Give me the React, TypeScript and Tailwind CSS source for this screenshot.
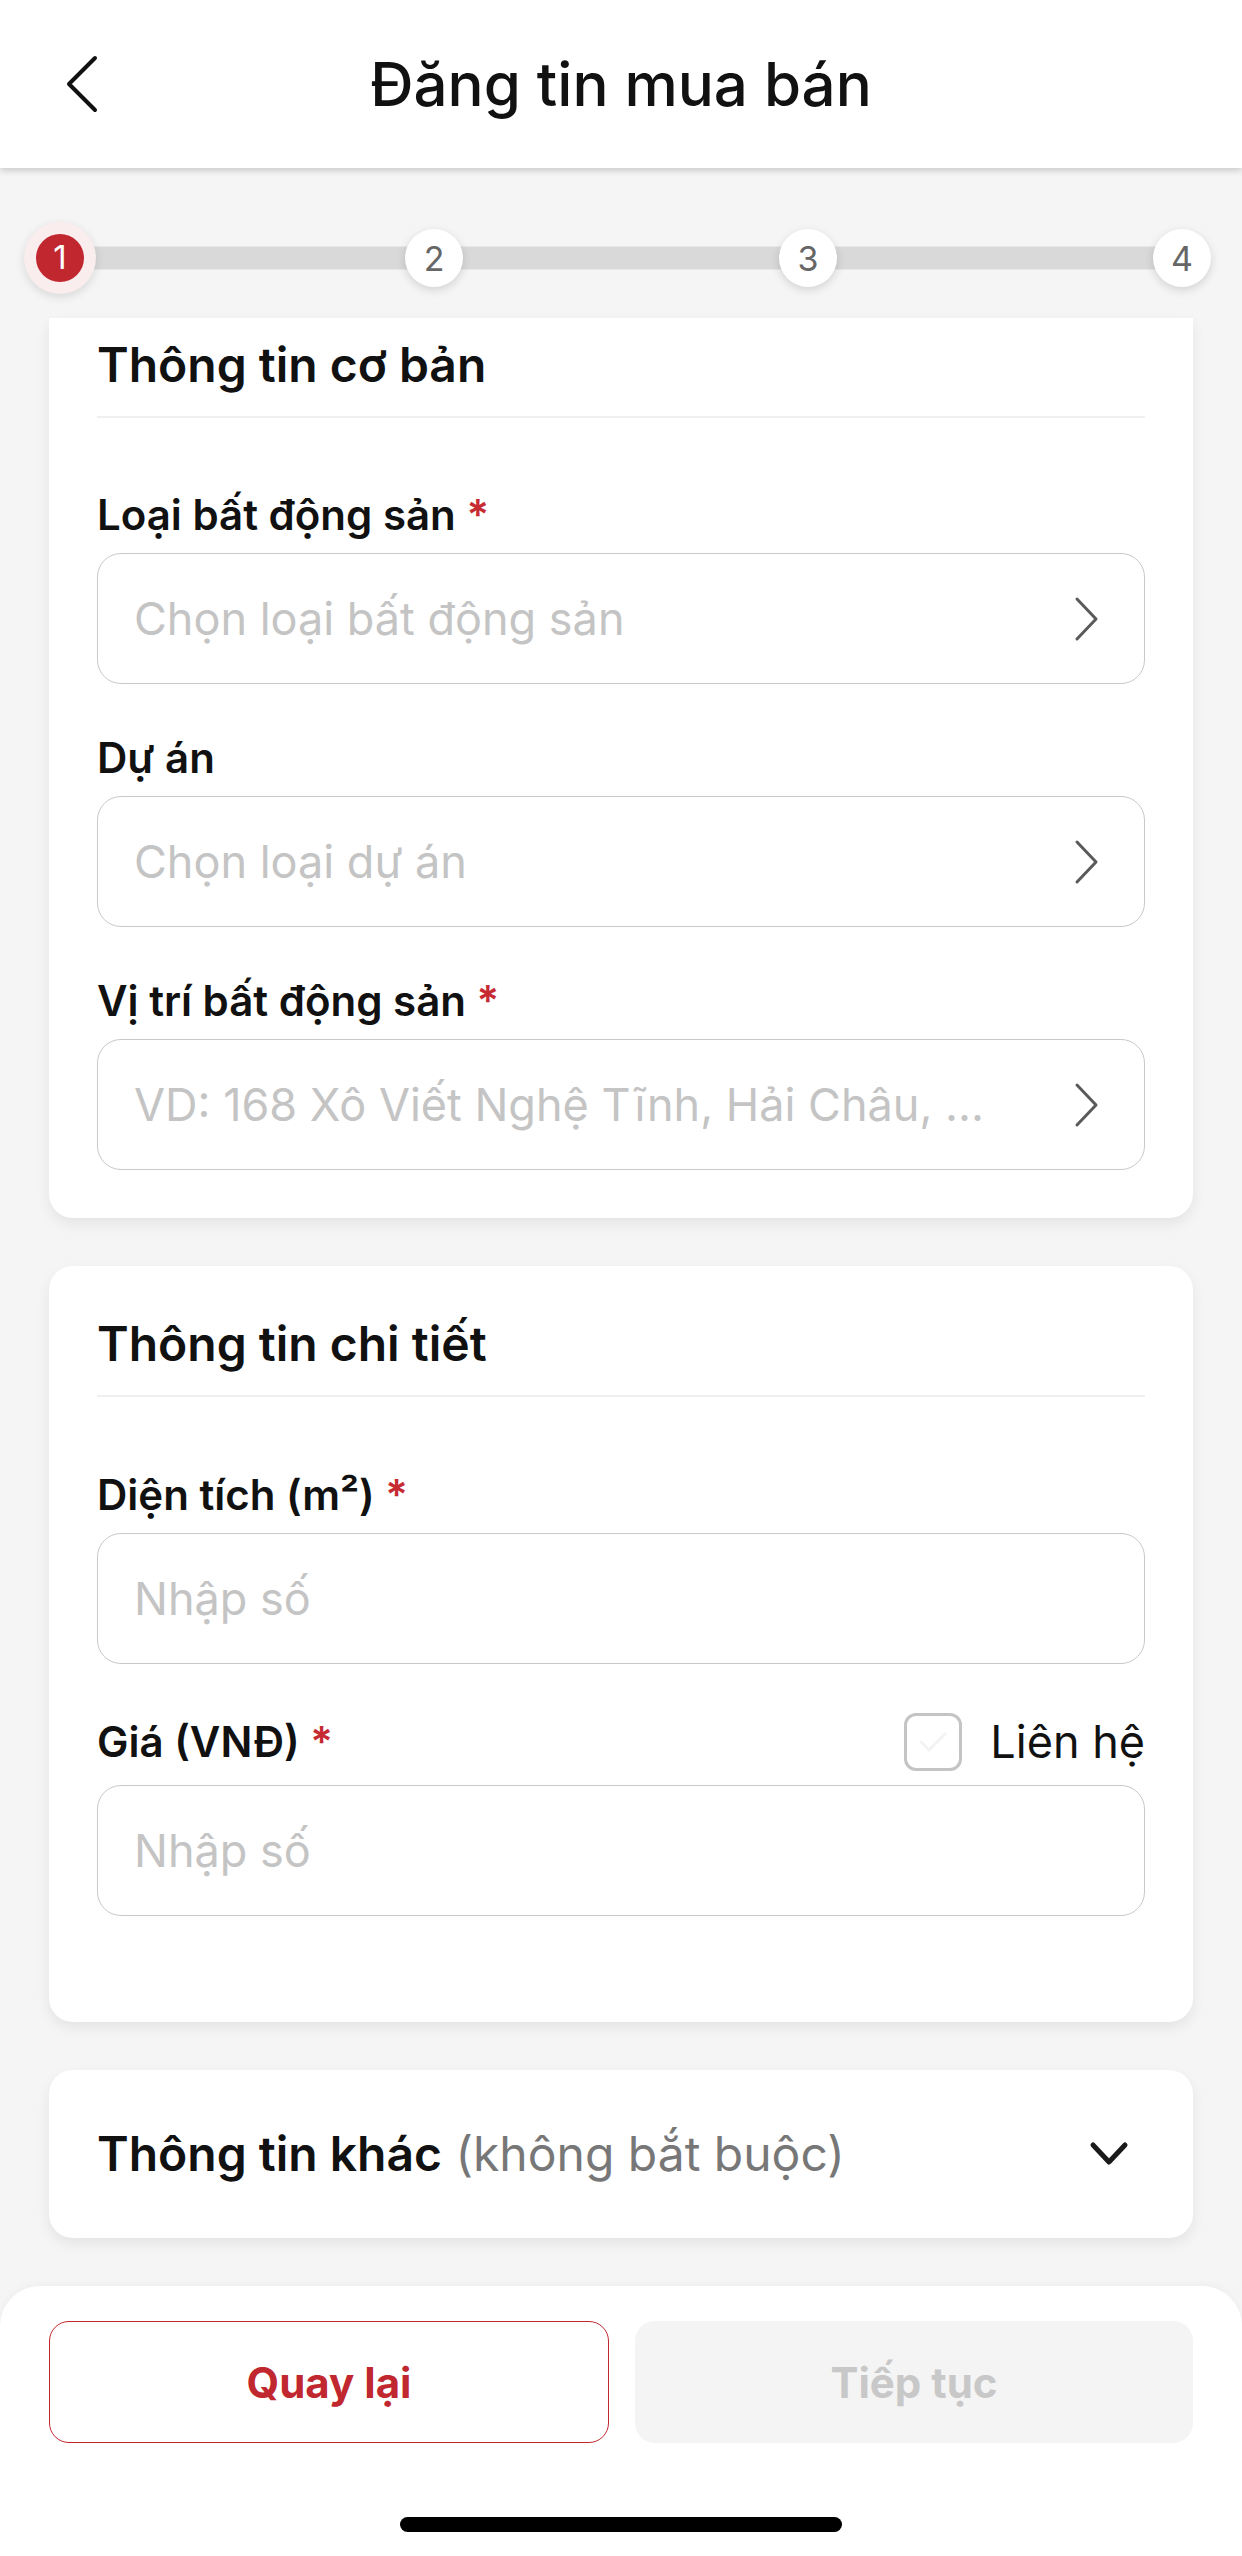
import React, { useState } from 'react';

const FONT = { fontFamily: 'Inter, "Noto Sans", sans-serif' };

const ChevronRight = () => (
  <svg width="26" height="46" viewBox="0 0 26 46" fill="none" className="shrink-0">
    <path d="M3 3 L22 23 L3 43" stroke="#5a5a5a" strokeWidth="3" strokeLinecap="round" strokeLinejoin="round" />
  </svg>
);

const Label = ({ text, required }: { text: string; required?: boolean }) => (
  <div className="text-[42px] leading-[50px] font-semibold text-[#111]">
    {text}
    {required && <span className="text-[#c62a32]"> *</span>}
  </div>
);

const SelectField = ({ label, placeholder, required }: { label: string; placeholder: string; required?: boolean }) => (
  <div className="flex flex-col">
    <Label text={label} required={required} />
    <div className="mt-[13px] h-[131px] rounded-[24px] border-[1.5px] border-[#c9c9c9] flex items-center justify-between pl-[36px] pr-[44px]">
      <span className="text-[45px] text-[#c4c4c4] truncate">{placeholder}</span>
      <ChevronRight />
    </div>
  </div>
);

const NumberInput = () => (
  <div className="h-[131px] rounded-[24px] border-[1.5px] border-[#c9c9c9] flex items-center pl-[36px]">
    <span className="text-[45px] text-[#c4c4c4]">Nhập số</span>
  </div>
);

const Stepper = () => {
  const steps = [1, 2, 3, 4];
  return (
    <div className="h-[150px] shrink-0 px-[24px]">
      <div className="relative mt-[54px] h-[72px] flex items-center justify-between">
        <div className="absolute left-[36px] right-[36px] top-1/2 -translate-y-1/2 h-[23px] bg-[#d9d9d9]" />
        {steps.map((s) => (
          <div key={s} className="relative w-[72px] h-[72px] flex items-center justify-center">
            {s === 1 ? (
              <div className="w-[72px] h-[72px] rounded-full bg-[#f9eded] flex items-center justify-center shadow-[0_3px_10px_rgba(0,0,0,0.12)]">
                <div className="w-[48px] h-[48px] rounded-full bg-[#c1272f] text-white text-[33px] flex items-center justify-center">
                  {s}
                </div>
              </div>
            ) : (
              <div className="w-[58px] h-[58px] rounded-full bg-white text-[#666] text-[34px] flex items-center justify-center shadow-[0_3px_10px_rgba(0,0,0,0.14)]">
                {s}
              </div>
            )}
          </div>
        ))}
      </div>
    </div>
  );
};

export default function App() {
  const [contact, setContact] = useState(false);

  return (
    <div className="w-[1242px] h-[2556px] bg-[#f5f5f5] flex flex-col overflow-hidden" style={FONT}>
      {/* Header */}
      <div className="relative z-10 h-[168px] shrink-0 bg-white shadow-[0_3px_6px_rgba(0,0,0,0.16)] grid grid-cols-[1fr_auto_1fr] items-center">
        <div className="pl-[66px]">
          <svg width="32" height="58" viewBox="0 0 32 58" fill="none">
            <path d="M29 3 L3 29 L29 55" stroke="#111" strokeWidth="4" strokeLinecap="round" strokeLinejoin="round" />
          </svg>
        </div>
        <div className="text-[60px] font-medium text-[#111]">Đăng tin mua bán</div>
        <div />
      </div>

      <Stepper />

      {/* Thông tin cơ bản */}
      <div className="mx-[49px] shrink-0 bg-white rounded-b-[24px] shadow-[0_6px_14px_rgba(0,0,0,0.07)] px-[48px] pt-[18px] pb-[48px]">
        <div className="text-[48px] leading-[58px] font-semibold text-[#111]">Thông tin cơ bản</div>
        <div className="mt-[22px] h-[2px] bg-[#f0f0f0]" />
        <div className="mt-[72px] flex flex-col gap-[49px]">
          <SelectField label="Loại bất động sản" placeholder="Chọn loại bất động sản" required />
          <SelectField label="Dự án" placeholder="Chọn loại dự án" />
          <SelectField label="Vị trí bất động sản" placeholder="VD: 168 Xô Viết Nghệ Tĩnh, Hải Châu, ..." required />
        </div>
      </div>

      {/* Thông tin chi tiết */}
      <div className="mx-[49px] mt-[48px] shrink-0 bg-white rounded-[24px] shadow-[0_6px_14px_rgba(0,0,0,0.07)] px-[48px] pt-[49px] pb-[106px]">
        <div className="text-[48px] leading-[58px] font-semibold text-[#111]">Thông tin chi tiết</div>
        <div className="mt-[22px] h-[2px] bg-[#f0f0f0]" />
        <div className="mt-[73px] flex flex-col">
          <Label text="Diện tích (m²)" required />
          <div className="mt-[13px]">
            <NumberInput />
          </div>
        </div>
        <div className="mt-[49px] flex flex-col">
          <div className="h-[58px] flex items-center justify-between">
            <Label text="Giá (VNĐ)" required />
            <button className="flex items-center" onClick={() => setContact(!contact)}>
              <span className="w-[58px] h-[58px] rounded-[12px] border-[3px] border-[#c4c4c4] flex items-center justify-center">
                <svg width="30" height="22" viewBox="0 0 30 22" fill="none">
                  <path d="M3 11 L11 19 L27 3" stroke={contact ? '#c1272f' : '#f3f3f3'} strokeWidth="3" strokeLinecap="round" strokeLinejoin="round" />
                </svg>
              </span>
              <span className="ml-[28px] text-[45px] text-[#111]">Liên hệ</span>
            </button>
          </div>
          <div className="mt-[14px]">
            <NumberInput />
          </div>
        </div>
      </div>

      {/* Thông tin khác */}
      <div className="mx-[49px] mt-[48px] h-[168px] shrink-0 bg-white rounded-[24px] shadow-[0_6px_14px_rgba(0,0,0,0.07)] px-[48px] flex items-center justify-between">
        <div className="text-[48px]">
          <span className="font-semibold text-[#111]">Thông tin khác</span>
          <span className="text-[#777]"> (không bắt buộc)</span>
        </div>
        <svg width="40" height="26" viewBox="0 0 40 26" fill="none" className="mr-[16px]">
          <path d="M4 4 L20 21 L36 4" stroke="#1a1a1a" strokeWidth="5" strokeLinecap="round" strokeLinejoin="round" />
        </svg>
      </div>

      {/* Bottom bar */}
      <div className="mt-auto h-[270px] shrink-0 bg-white rounded-t-[40px] shadow-[0_-2px_8px_rgba(0,0,0,0.03)] flex flex-col px-[49px] pt-[35px]">
        <div className="flex gap-[26px]">
          <button className="flex-1 h-[122px] rounded-[20px] border-[1.5px] border-[#c1272f] text-[#c1272f] text-[42px] font-bold">
            Quay lại
          </button>
          <button className="flex-1 h-[122px] rounded-[20px] bg-[#f4f4f4] text-[#c8c8c8] text-[42px] font-bold">
            Tiếp tục
          </button>
        </div>
        <div className="mt-[74px] mx-auto w-[442px] h-[15px] rounded-full bg-black" />
      </div>
    </div>
  );
}
